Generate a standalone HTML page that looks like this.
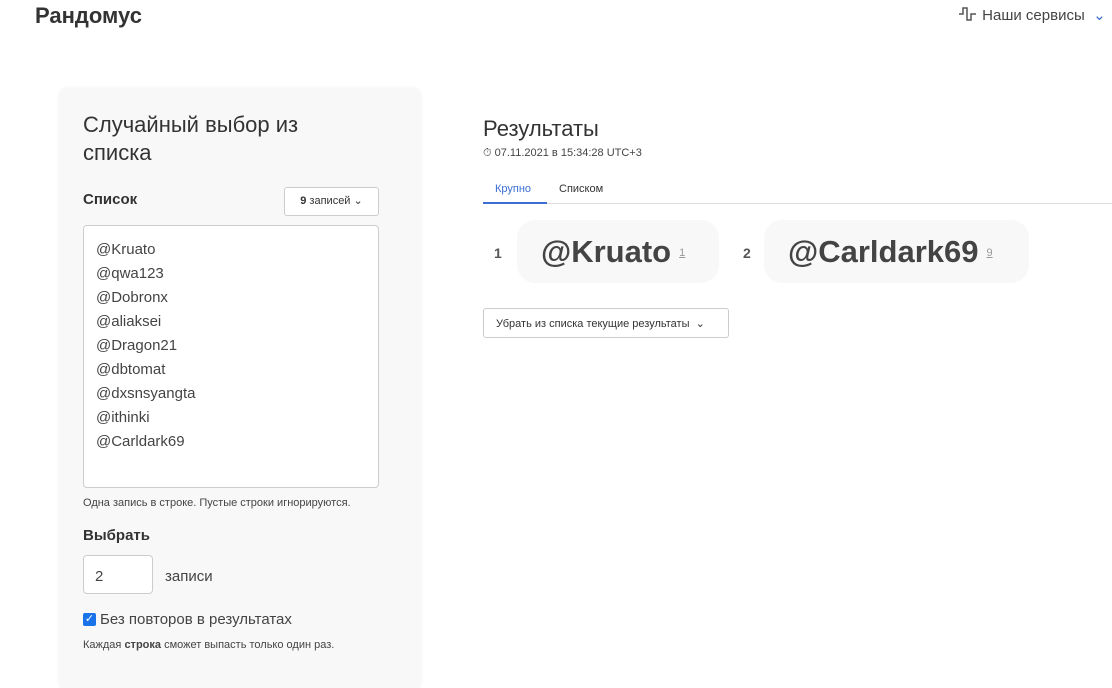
<!DOCTYPE html>
<html><head><meta charset="utf-8"><style>
*{box-sizing:border-box;margin:0;padding:0}
body{width:1112px;height:660px;overflow:hidden;background:#fff;font-family:"Liberation Sans",sans-serif;color:#333;position:relative}
.a{position:absolute;white-space:nowrap}
.card{position:absolute;left:60px;top:88px;width:360px;height:600px;background:#f8f8f8;border-radius:6px;box-shadow:0 1px 5px rgba(0,0,0,.07)}
.ta{position:absolute;left:83px;top:225px;width:296px;height:263px;background:#fff;border:1px solid #ccc;border-radius:4px;padding:12px 12px;font-size:15px;line-height:24px;color:#444}
.box{position:absolute;top:220px;height:63px;background:#f8f8f8;border-radius:18px;font-size:31px;font-weight:bold;color:#444;line-height:63px;padding-left:24px}
.box sup{font-size:11px;font-weight:normal;color:#999;text-decoration:underline;vertical-align:0;position:relative;top:-6px;margin-left:8px}
</style></head><body>
<div class="a" style="left:35px;top:3px;font-size:22px;font-weight:bold;color:#333">Рандомус</div>
<div class="a" style="left:958px;top:6px;font-size:15px;color:#444"><svg width="20" height="16" viewBox="0 0 20 16" style="vertical-align:-2px"><path d="M1 8h4V2h4v12h4V8h5" fill="none" stroke="#555" stroke-width="1.5"/></svg> Наши сервисы &nbsp;<span style="color:#3b6fd4">⌄</span></div>
<div class="card"></div>
<div class="a" style="left:83px;top:111px;font-size:22px;line-height:28px;color:#333">Случайный выбор из<br>списка</div>
<div class="a" style="left:83px;top:191px;font-size:15px;font-weight:bold">Список</div>
<div class="a" style="left:284px;top:187px;width:95px;height:29px;background:#fff;border:1px solid #ccc;border-radius:3px;font-size:11px;line-height:27px;text-align:center"><b>9</b> записей &#8964;</div>
<div class="ta">@Kruato<br>@qwa123<br>@Dobronx<br>@aliaksei<br>@Dragon21<br>@dbtomat<br>@dxsnsyangta<br>@ithinki<br>@Carldark69</div>
<div class="a" style="left:83px;top:497px;font-size:11px;color:#444">Одна запись в строке. Пустые строки игнорируются.</div>
<div class="a" style="left:83px;top:527px;font-size:15px;font-weight:bold">Выбрать</div>
<div class="a" style="left:83px;top:555px;width:70px;height:39px;background:#fff;border:1px solid #ccc;border-radius:4px;font-size:15px;line-height:41px;padding-left:11px;color:#444">2</div>
<div class="a" style="left:165px;top:568px;font-size:15px;color:#444">записи</div>
<div class="a" style="left:83px;top:613px;width:13px;height:13px;background:#1a73e8;border-radius:2px;color:#fff;font-size:11px;line-height:13px;text-align:center">✓</div>
<div class="a" style="left:100px;top:611px;font-size:15px;color:#444">Без повторов в результатах</div>
<div class="a" style="left:83px;top:639px;font-size:11px;color:#444">Каждая <b>строка</b> сможет выпасть только один раз.</div>
<div class="a" style="left:483px;top:116px;font-size:22px;color:#333">Результаты</div>
<div class="a" style="left:483px;top:147px;font-size:11px;color:#444">⏱ 07.11.2021 в 15:34:28 UTC+3</div>
<div class="a" style="left:495px;top:183px;font-size:11px;color:#3b6fd4">Крупно</div>
<div class="a" style="left:559px;top:183px;font-size:11px;color:#333">Списком</div>
<div class="a" style="left:483px;top:203px;width:629px;height:1px;background:#ddd"></div>
<div class="a" style="left:483px;top:202px;width:64px;height:2px;background:#3b6fd4"></div>
<div class="a" style="left:494px;top:245px;font-size:14px;font-weight:bold;color:#555">1</div>
<div class="box" style="left:517px;width:202px">@Kruato<sup>1</sup></div>
<div class="a" style="left:743px;top:245px;font-size:14px;font-weight:bold;color:#555">2</div>
<div class="box" style="left:764px;width:265px">@Carldark69<sup>9</sup></div>
<div class="a" style="left:483px;top:308px;width:246px;height:30px;border:1px solid #ccc;border-radius:3px;font-size:11px;line-height:30px;padding-left:12px;color:#333">Убрать из списка текущие результаты &nbsp;&#8964;</div>
</body></html>
